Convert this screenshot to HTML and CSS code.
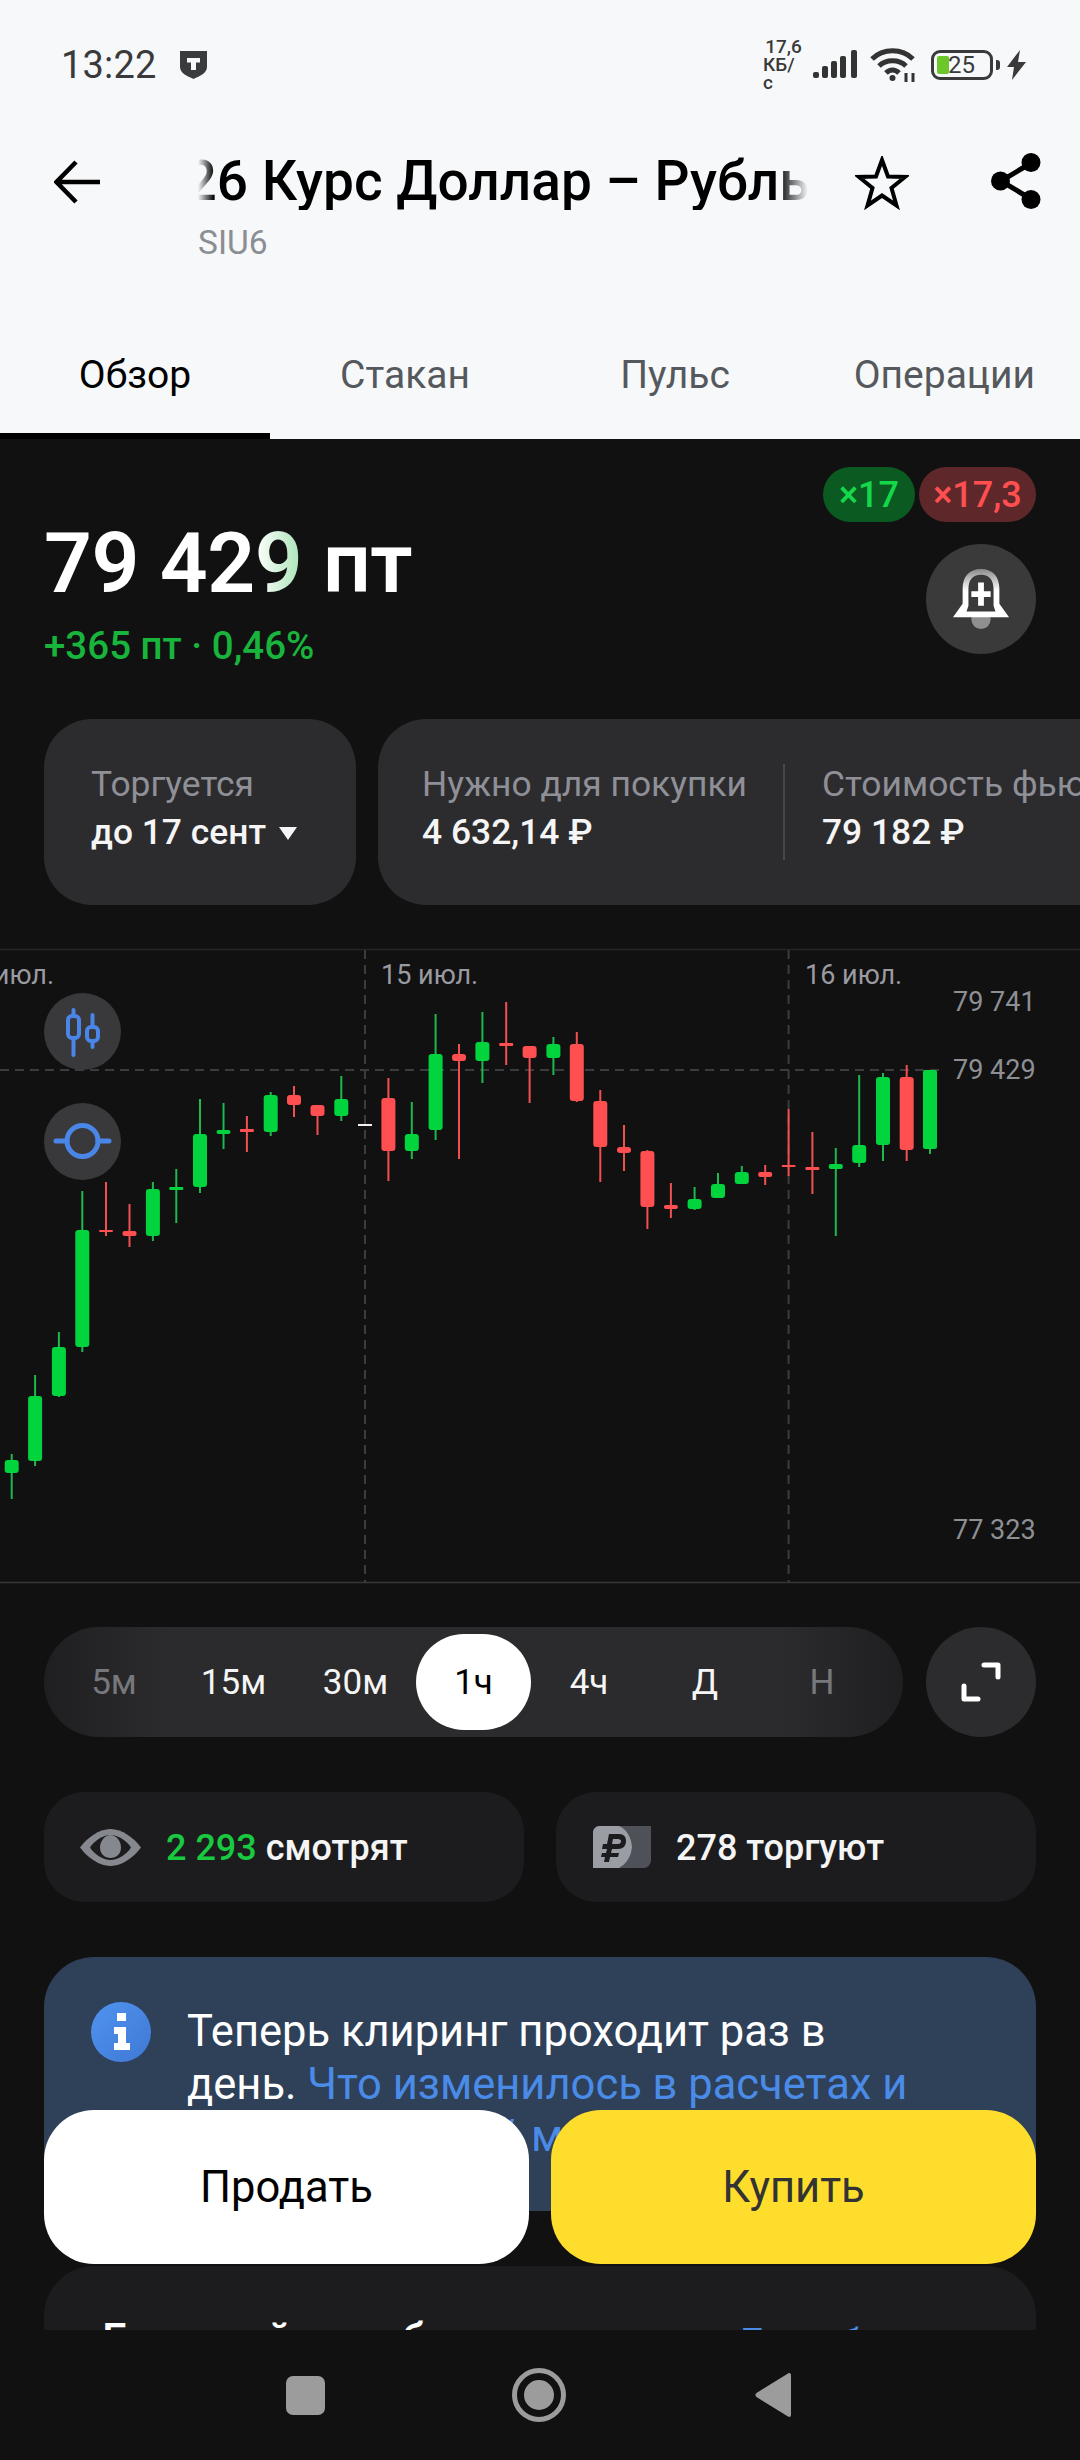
FILE: index.html
```html
<!DOCTYPE html>
<html lang="ru">
<head>
<meta charset="utf-8">
<title>SIU6</title>
<link rel="stylesheet" href="styles.css">
</head>
<body>
<div class="screen">
  <section class="top">
    <div class="status">
      <div class="status-left">
        <span class="clock">13:22</span>
        <svg class="shield" viewBox="0 0 27 28"><path d="M0 0H27V16C27 22 20 25 13.500 28C7 25 0 22 0 16Z" fill="#3a3b3d"/><path d="M7 7H20V11.500H16V19H11V11.500H7Z" fill="#f7f8fa"/></svg>
      </div>
      <div class="status-right">
        <div class="speed"><span>17,6</span><span>КБ/с</span></div>
        <svg class="signal" viewBox="0 0 45 30" fill="#333"><rect x="0" y="22" width="6" height="6" rx="2"/><rect x="9" y="16" width="6" height="12" rx="2"/><rect x="18" y="11" width="6" height="17" rx="2"/><rect x="27" y="6" width="6" height="22" rx="2"/><rect x="38" y="0" width="6" height="28" rx="2"/></svg>
        <svg class="wifi" viewBox="0 0 46 34" fill="none" stroke="#333" stroke-width="5"><path d="M2 11C13 0 32 0 43 11"/><path d="M9 18C16 11 29 11 36 18"/><path d="M16 25C20 21 25 21 29 25"/><circle cx="22.500" cy="30" r="3" fill="#333" stroke="none"/><path d="M36 25V34M43 25V34" stroke-width="3"/></svg>
        <div class="battery"><i class="level"></i><span>25</span></div>
        <i class="nub"></i>
        <svg class="bolt" viewBox="0 0 19 30"><path d="M13 0L0 17H7L5 30L19 12H11Z" fill="#3a3a3a"/></svg>
      </div>
    </div>
    <div class="header">
      <svg class="back" viewBox="0 0 46 44" fill="none" stroke="#000" stroke-width="4.500"><path d="M46 22H3M22 2L2.500 22L22 42"/></svg>
      <div class="head-text">
        <div class="title"><span>Си-9.26 Курс Доллар – Рубль</span></div>
        <div class="ticker">SIU6</div>
      </div>
      <svg class="star" viewBox="0 0 54 54" fill="none" stroke="#000" stroke-width="4"><path d="M27 4L33 20.500L50 21L36.500 32L41.500 49.500L27 39.500L12.500 49.500L17.500 32L4 21L21 20.500Z"/></svg>
      <svg class="share" viewBox="0 0 50 56"><path d="M40 10L10 28L40 46" fill="none" stroke="#000" stroke-width="5"/><circle cx="40" cy="9.500" r="9.500"/><circle cx="9.500" cy="28" r="9.500"/><circle cx="40" cy="46.500" r="9.500"/></svg>
    </div>
    <nav class="tabs">
      <a class="tab active">Обзор</a>
      <a class="tab">Стакан</a>
      <a class="tab">Пульс</a>
      <a class="tab">Операции</a>
    </nav>
  </section>

  <main class="main">
    <div class="badges">
      <span class="badge buy">×17</span>
      <span class="badge sell">×17,3</span>
    </div>
    <div class="quote">
      <div>
        <div class="price">79 42<span class="fresh">9</span> пт</div>
        <div class="change">+365 пт · 0,46%</div>
      </div>
      <button class="bell-btn">
        <svg class="bell" viewBox="0 0 60 62"><defs><linearGradient id="dome" x1="0" y1="0" x2="0" y2="1"><stop offset="0" stop-color="#8a8a8a"/><stop offset=".45" stop-color="#fff"/></linearGradient></defs><circle cx="30" cy="52" r="10" fill="#8f8f8f"/><path d="M30 0C42 0 49 8 49 20V36L59 50H1L11 36V20C11 8 18 0 30 0Z" fill="url(#dome)"/><path d="M30 6C39 6 43 12 43 21V38L45 44H15L17 38V21C17 12 21 6 30 6Z" fill="#3a3a3a"/><path d="M27 14H33V23H40V29H33V38H27V29H20V23H27Z" fill="#fff"/></svg>
      </button>
    </div>
    <div class="chips">
      <div class="chip chip-single">
        <div class="chip-item">
          <span class="chip-label">Торгуется</span>
          <span class="chip-value">до 17 сент <i class="caret"></i></span>
        </div>
      </div>
      <div class="chip chip-wide">
        <div class="chip-item divided">
          <span class="chip-label">Нужно для покупки</span>
          <span class="chip-value">4 632,14 ₽</span>
        </div>
        <div class="chip-item">
          <span class="chip-label">Стоимость фьючерса</span>
          <span class="chip-value">79 182 ₽</span>
        </div>
      </div>
    </div>

    <div class="chart">
      <svg class="plot" viewBox="0 945 1080 640">
        <path class="edge" d="M0 949.500H1080"/>
        <path class="edge strong" d="M0 1582.500H1080"/>
        <path class="grid" d="M0 1070H941M365 950V1582M788.600 950V1582"/>
        <text class="date" x="54" y="984" text-anchor="end">14 июл.</text>
        <text class="date" x="381" y="984">15 июл.</text>
        <text class="date" x="805" y="984">16 июл.</text>
        <text class="axis" x="953" y="1011">79 741</text>
        <text class="axis" x="953" y="1079">79 429</text>
        <text class="axis" x="953" y="1539">77 323</text>
        <path class="wick-up" d="M11.700 1454V1499M35.100 1375V1466M58.900 1332V1397M82.300 1191V1352M152.900 1182V1241M176.300 1169V1223M200 1099V1193M223.500 1103V1149M270.700 1092V1136M341.300 1076V1121M411.800 1102V1159M435.600 1014V1140M482.400 1012V1083M553.400 1037V1075M694.600 1187V1210M718 1173V1198M741.800 1166V1184M835.800 1148V1236M859.200 1075V1167M883 1073V1161M930 1070V1154"/>
        <path class="wick-down" d="M106 1182V1236M129.500 1204V1247M246.900 1116V1152M294 1086V1117M317.500 1105V1135M388.400 1078V1181M459 1044V1159M506.200 1002V1065M529.600 1046V1103M576.800 1032V1102M600.300 1090V1182M624 1125V1171M647.400 1150V1229M670.900 1183V1218M765.200 1165V1185M788.600 1109V1176M812.400 1132V1194M906.700 1065V1161"/>
        <g class="up">
          <rect x="4.700" y="1460" width="14" height="13" rx="3"/><rect x="28.100" y="1396" width="14" height="65" rx="3"/><rect x="51.900" y="1347" width="14" height="49" rx="3"/><rect x="75.300" y="1230" width="14" height="117" rx="3"/><rect x="145.900" y="1189" width="14" height="47" rx="3"/><rect x="169.300" y="1187" width="14" height="3" rx="1"/><rect x="193" y="1134" width="14" height="53" rx="3"/><rect x="216.500" y="1130" width="14" height="4" rx="2"/><rect x="263.700" y="1095" width="14" height="37" rx="3"/><rect x="334.300" y="1099" width="14" height="17" rx="3"/><rect x="404.800" y="1134" width="14" height="17" rx="3"/><rect x="428.600" y="1054" width="14" height="76" rx="3"/><rect x="475.400" y="1042" width="14" height="19" rx="3"/><rect x="546.400" y="1044" width="14" height="14" rx="3"/><rect x="687.600" y="1199" width="14" height="10" rx="3"/><rect x="711" y="1184" width="14" height="14" rx="3"/><rect x="734.800" y="1172" width="14" height="12" rx="3"/><rect x="828.800" y="1164" width="14" height="5" rx="2"/><rect x="852.200" y="1145" width="14" height="18" rx="3"/><rect x="876" y="1077" width="14" height="68" rx="3"/><rect x="923" y="1070" width="14" height="79" rx="2"/>
        </g>
        <g class="down">
          <rect x="99" y="1230" width="14" height="2" rx="1"/><rect x="122.500" y="1231" width="14" height="5" rx="2"/><rect x="239.900" y="1129" width="14" height="3" rx="1"/><rect x="287" y="1095" width="14" height="10" rx="3"/><rect x="310.500" y="1105" width="14" height="11" rx="3"/><rect x="381.400" y="1098" width="14" height="53" rx="3"/><rect x="452" y="1054" width="14" height="7" rx="3"/><rect x="499.200" y="1043" width="14" height="3" rx="1"/><rect x="522.600" y="1046" width="14" height="12" rx="3"/><rect x="569.800" y="1044" width="14" height="57" rx="3"/><rect x="593.300" y="1101" width="14" height="46" rx="3"/><rect x="617" y="1147" width="14" height="6" rx="3"/><rect x="640.400" y="1151" width="14" height="56" rx="3"/><rect x="663.900" y="1205" width="14" height="4" rx="2"/><rect x="758.200" y="1172" width="14" height="5" rx="2"/><rect x="781.600" y="1165" width="14" height="2" rx="1"/><rect x="805.400" y="1167" width="14" height="3" rx="1"/><rect x="899.700" y="1077" width="14" height="73" rx="3"/>
        </g>
        <rect class="flat" x="358" y="1124" width="14" height="2"/>
      </svg>
      <button class="tool tool-a">
        <svg viewBox="0 0 77 77" fill="none" stroke="#4a86e8" stroke-width="4" stroke-linecap="round"><rect x="24" y="23" width="11" height="22" rx="4"/><path d="M29.500 17V23M29.500 45V62"/><rect x="43" y="34" width="11" height="14" rx="4"/><path d="M48.500 22V34M48.500 48V54"/></svg>
      </button>
      <button class="tool tool-b">
        <svg viewBox="0 0 77 77" fill="none" stroke="#4a86e8" stroke-width="5" stroke-linecap="round"><circle cx="38.500" cy="38" r="15.500"/><path d="M12 38H23M54 38H65"/></svg>
      </button>
    </div>

    <div class="frames">
      <div class="frame-pill">
        <span class="frame dim">5м</span>
        <span class="frame">15м</span>
        <span class="frame">30м</span>
        <span class="frame selected">1ч</span>
        <span class="frame">4ч</span>
        <span class="frame">Д</span>
        <span class="frame dim">Н</span>
      </div>
      <button class="expand">
        <svg viewBox="0 0 40 40" fill="none" stroke="#fff" stroke-width="5" stroke-linecap="round" stroke-linejoin="round"><path d="M23 3H37V15M3 24V37H17"/></svg>
      </button>
    </div>

    <div class="stats">
      <div class="stat">
        <svg class="eye" viewBox="0 0 61 37"><path d="M30.500 0C42 0 54 9 61 18.500C54 28 42 37 30.500 37C19 37 7 28 0 18.500C7 9 19 0 30.500 0Z" fill="#85888e"/><path d="M30.500 6C38 6 47 12 51 18.500C47 25 38 31 30.500 31C23 31 14 25 10 18.500C14 12 23 6 30.500 6Z" fill="#1c1c1e"/><path d="M30.500 6C36 6 41 12 41 18.500C41 25 36 29 30.500 29C25 29 20 25 20 18.500C20 12 25 6 30.500 6Z" fill="#85888e"/></svg>
        <span class="stat-text"><b>2 293</b> смотрят</span>
      </div>
      <div class="stat stat-b">
        <svg class="coin" viewBox="0 0 58 42"><path d="M8 0H58V34C58 38 55 42 51 42H12L30 20Z" fill="#4e5157"/><path d="M6 0H26C33 3 38 10 39 21C38 31 33 38 26 42H0V6C0 3 3 0 6 0Z" fill="#9a9da3"/><path d="M16 8H26C31 8 33 11 33 15C33 20 30 23 25 23H19L18 27H26L25 31H17L16 36H11L12 31H8L9 27H13L14 23H9L10 18H14ZM20 13L19 18H25C27 18 28 17 28 15C28 14 27 13 25 13Z" fill="#1c1c1e"/></svg>
        <span class="stat-text">278 торгуют</span>
      </div>
    </div>

    <div class="notice">
      <svg class="info" viewBox="0 0 60 60"><defs><linearGradient id="infoFill" x1="0" y1="0" x2="1" y2="1"><stop offset="0" stop-color="#4f94f0"/><stop offset="1" stop-color="#3f78d4"/></linearGradient></defs><circle cx="30" cy="30" r="30" fill="url(#infoFill)"/><path d="M26 11H35V19H26ZM23 25H35V41H39V48H23V41H27V32H23Z" fill="#fff"/></svg>
      <p class="notice-text">Теперь клиринг проходит раз в день. <a>Что изменилось в расчетах и в вариационной марже</a></p>
    </div>

    <div class="next-card">
      <h2 class="next-title">Гарантийное обеспечение</h2>
      <a class="next-link">Подробнее</a>
    </div>
  </main>

  <div class="actions">
    <button class="action sell-btn">Продать</button>
    <button class="action buy-btn">Купить</button>
  </div>

  <footer class="navbar">
    <i class="nav-square"></i>
    <svg class="nav-home" viewBox="0 0 54 54"><circle cx="27" cy="27" r="24.500" fill="none" stroke="#9c9c9c" stroke-width="5"/><circle cx="27" cy="27" r="15" fill="#9c9c9c"/></svg>
    <svg class="nav-back" viewBox="0 0 36 46"><path d="M33 1.500C35 0.500 36 1.500 36 3.500V42.500C36 44.500 35 45.500 33 44.500L1.500 25C0 24 0 22 1.500 21Z" fill="#9c9c9c"/></svg>
  </footer>
</div>
</body>
</html>
```
FILE: styles.css
```css
* { box-sizing: border-box; }
html, body { margin: 0; padding: 0; background: #111112; }
body { font-family: Roboto, "Noto Sans", sans-serif; }
button { border: 0; padding: 0; font: inherit; }

.screen { position: relative; width: 1080px; height: 2460px; overflow: hidden; background: #111112; }

/* top light block */
.top { height: 439px; background: #f6f8fa; color: #000; }
.status { height: 130px; display: flex; justify-content: space-between; align-items: center; padding: 0 54px 0 61px; }
.status-left { display: flex; align-items: center; gap: 23px; }
.clock { font-size: 38px; color: #3a3a3a; letter-spacing: .2px; }
.shield { width: 27px; height: 28px; }
.status-right { display: flex; align-items: center; }
.speed { display: flex; flex-direction: column; align-items: center; width: 41px; font-size: 19px; line-height: 18px; font-weight: 500; color: #3a3a3a; }
.signal { width: 45px; height: 30px; margin-left: 9px; }
.wifi { width: 46px; height: 34px; margin-left: 12px; }
.battery { position: relative; width: 62px; height: 30px; margin-left: 15px; border: 3.5px solid #3a3a3a; border-radius: 9px; display: flex; align-items: center; font-size: 24px; color: #3a3a3a; }
.level { position: absolute; left: 3px; top: 3px; bottom: 3px; width: 12px; background: #6cc72b; border-radius: 2px; }
.battery span { position: relative; margin-left: 14px; line-height: 1; }
.nub { width: 4px; height: 10px; margin-left: 3px; background: #3a3a3a; border-radius: 0 3px 3px 0; }
.bolt { width: 19px; height: 30px; margin-left: 7px; }

.header { display: flex; height: 144px; padding-top: 22px; }
.back { width: 46px; height: 44px; margin: 8px 0 0 54px; }
.head-text { width: 612px; margin-left: 98px; }
.title { height: 58px; overflow: hidden; white-space: nowrap; font-size: 55px; line-height: 58px; font-weight: 500; -webkit-mask-image: linear-gradient(90deg, transparent, #000 16px, #000 580px, transparent 610px); mask-image: linear-gradient(90deg, transparent, #000 16px, #000 580px, transparent 610px); }
.title span { display: inline-block; margin-left: -145px; }
.ticker { margin-top: 15px; font-size: 33.500px; line-height: 36px; color: #8b8e93; }
.star { width: 54px; height: 54px; margin: 4px 0 0 45px; }
.share { width: 50px; height: 56px; margin: 1px 0 0 82px; }

.tabs { display: grid; grid-template-columns: repeat(4, 270px); height: 165px; }
.tab { position: relative; display: flex; justify-content: center; padding-top: 76px; height: 165px; font-size: 39px; line-height: 50px; color: #55585c; }
.tab.active { color: #000; }
.tab.active::after { content: ""; position: absolute; left: 0; right: 0; bottom: 0; height: 6px; background: #000; }
.tab:last-child { justify-content: flex-end; padding-right: 45px; }

/* dark block */
.main { position: relative; height: 1891px; overflow: hidden; background: #111112; color: #fff; }
.badges { display: flex; justify-content: flex-end; gap: 4px; padding: 28px 44px 0 0; }
.badge { height: 55px; border-radius: 28px; display: flex; align-items: center; justify-content: center; font-size: 36px; font-weight: 500; }
.badge.buy { width: 92px; background: #0a5a22; color: #14d84a; }
.badge.sell { width: 117px; background: #5e2729; color: #ff4f50; }

.quote { display: flex; justify-content: space-between; padding: 0 44px; height: 197px; }
.price { font-size: 84px; line-height: 84px; font-weight: 600; white-space: nowrap; letter-spacing: -.4px; }
.fresh { background: linear-gradient(90deg, #fff, #a9e4b6); -webkit-background-clip: text; background-clip: text; color: transparent; }
.change { margin-top: 18px; font-size: 38.500px; line-height: 44px; font-weight: 500; color: #18b43c; }
.bell-btn { width: 110px; height: 110px; margin-top: 22px; border-radius: 50%; background: #3a3a3b; display: flex; align-items: center; justify-content: center; }
.bell { width: 58px; height: 60px; }

.chips { display: flex; gap: 22px; padding-left: 44px; height: 186px; overflow: hidden; }
.chip { flex: none; height: 186px; background: #2c2c2e; border-radius: 48px; display: flex; align-items: center; }
.chip-single { width: 312px; padding-left: 47px; }
.chip-wide { width: 900px; padding-left: 44px; }
.chip-item { display: flex; flex-direction: column; gap: 8px; white-space: nowrap; margin-bottom: 8px; }
.chip-item.divided { padding: 0 36px 8px 0; margin: 0 37px 0 0; border-right: 2px solid #48484a; height: 96px; justify-content: center; }
.chip-label { font-size: 35.400px; line-height: 40px; color: #8f9097; }
.chip-value { font-size: 35.400px; line-height: 40px; font-weight: 500; color: #f5f5f5; }
.caret { display: inline-block; width: 0; height: 0; margin-left: 4px; vertical-align: 4px; border: 9px solid transparent; border-top: 13px solid #f5f5f5; border-bottom: 0; }

.chart { position: relative; height: 640px; margin-top: 40px; }
.plot { display: block; width: 1080px; height: 640px; }
.edge { stroke: #262628; stroke-width: 1.500; fill: none; }
.edge.strong { stroke: #38383a; }
.grid { stroke: #3c3c3e; stroke-width: 2; stroke-dasharray: 9 6; fill: none; }
.date { font-size: 27px; fill: #9a9ba1; }
.axis { font-size: 27px; fill: #8e8f94; }
.wick-up { stroke: #1fb84c; stroke-width: 2; fill: none; }
.wick-down { stroke: #f15050; stroke-width: 2; fill: none; }
.up { fill: #02d43e; }
.down { fill: #ff4f50; }
.flat { fill: #f0f0f0; }
.tool { position: absolute; left: 44px; width: 77px; height: 77px; border-radius: 50%; background: #39393b; }
.tool svg { display: block; width: 77px; height: 77px; }
.tool-a { top: 48px; }
.tool-b { top: 158px; }

.frames { display: flex; justify-content: space-between; padding: 0 44px; margin-top: 42px; height: 110px; }
.frame-pill { position: relative; width: 859px; height: 110px; border-radius: 55px; background: linear-gradient(90deg, #1f1f21 0, #2b2b2d 14%, #2b2b2d 86%, #1f1f21 100%); display: grid; grid-template-columns: 116px 123px 121px 115px 116px 116px 118px; padding: 7px 0 7px 12px; }
.frame { display: flex; align-items: center; justify-content: center; border-radius: 48px; font-size: 35px; color: #f5f5f5; }
.frame.dim { color: #77787c; }
.frame.selected { background: #fff; color: #000; }
.expand { width: 110px; height: 110px; border-radius: 50%; background: #2c2c2e; display: flex; align-items: center; justify-content: center; }
.expand svg { width: 40px; height: 40px; }

.stats { display: flex; justify-content: space-between; padding: 0 44px; margin-top: 55px; }
.stat { width: 480px; height: 110px; border-radius: 40px; background: #1c1c1e; display: flex; align-items: center; padding-left: 36px; }
.stat-b { padding-left: 37px; }
.eye { width: 61px; height: 37px; }
.coin { width: 58px; height: 42px; }
.stat-text { margin: 2px 0 0 25px; font-size: 36px; font-weight: 500; white-space: nowrap; color: #f5f5f5; }
.stat-text b { font-weight: 500; color: #19c940; }

.notice { display: flex; margin: 55px 44px 0; height: 254px; padding: 45px 0 0 47px; border-radius: 50px 50px 0 0; background: #2f4059; overflow: hidden; }
.info { flex: none; width: 60px; height: 60px; }
.notice-text { width: 735px; margin: 4px 0 0 36px; font-size: 43.500px; line-height: 52.500px; color: #fff; }
.notice-text a { color: #4a8be8; }

.next-card { display: flex; justify-content: space-between; margin: 55px 44px 0; height: 120px; padding: 48px 120px 0 58px; border-radius: 50px 50px 0 0; background: #1c1c1e; }
.next-title { margin: 0; font-size: 44px; line-height: 52px; font-weight: 500; color: #fff; white-space: nowrap; }
.next-link { font-size: 34px; line-height: 52px; color: #4a8be8; }

.actions { position: absolute; left: 44px; top: 2110px; width: 992px; height: 154px; display: flex; justify-content: space-between; }
.action { width: 485px; height: 154px; border-radius: 50px; font-size: 43.500px; }
.sell-btn { background: #fff; color: #000; }
.buy-btn { background: #ffdd2d; color: #333; }

.navbar { height: 130px; background: #111112; display: flex; align-items: center; padding: 0 0 0 286px; }
.nav-square { width: 39px; height: 39px; border-radius: 7px; background: #9c9c9c; }
.nav-home { width: 54px; height: 54px; margin-left: 187px; }
.nav-back { width: 36px; height: 46px; margin-left: 189px; }
```
